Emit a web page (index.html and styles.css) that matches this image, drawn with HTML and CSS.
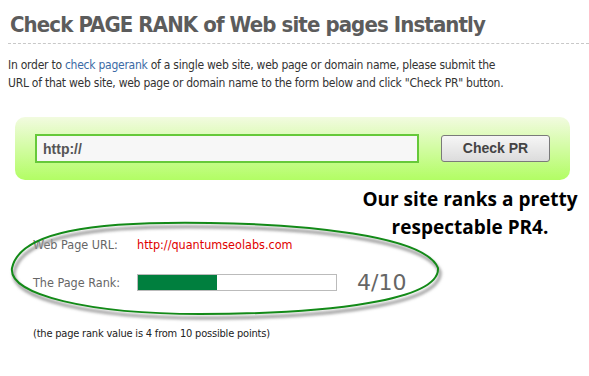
FILE: index.html
```html
<!DOCTYPE html>
<html lang="en">
<head>
    <meta charset="UTF-8">
    <meta name="viewport" content="width=device-width, initial-scale=1.0">
    <title>Check PAGE RANK</title>
    <link rel="stylesheet" href="styles.css">
</head>
<body>
    <div class="page">
        <h1 class="title">Check PAGE RANK of Web site pages Instantly</h1>
        <p class="intro">
            In order to <a href="#">check pagerank</a> of a single web site, web page or domain name, please submit the<br>
            URL of that web site, web page or domain name to the form below and click "Check PR" button.
        </p>

        <div class="check-box">
            <input type="text" class="url-input" value="http://">
            <button class="check-button">Check PR</button>
        </div>

        <p class="note">Our site ranks a pretty<br>respectable PR4.</p>

        <div class="result">
            <div class="result-row">
                <span class="result-label">Web Page URL:</span>
                <span class="result-url">http://quantumseolabs.com</span>
            </div>
            <div class="result-row">
                <span class="result-label">The Page Rank:</span>
                <div class="rank-bar"><div class="rank-fill" style="width: 40%"></div></div>
                <span class="rank-value">4/10</span>
            </div>
        </div>

        <p class="footnote">(the page rank value is 4 from 10 possible points)</p>

        <!-- hand drawn loop round the result -->
        <svg class="highlight" width="460" height="130" viewBox="0 0 460 130">
            <defs>
                <filter id="blur"><feGaussianBlur stdDeviation="1.8"></feGaussianBlur></filter>
            </defs>
            <path d="M12,68 C20,32 90,21 210,23 C300,24 425,35 438,68 C440,100 330,114 200,114 C90,114 8,95 12,68 Z"
                  fill="none" stroke="#9a9a9a" stroke-width="3" filter="url(#blur)" transform="translate(2 4)"></path>
            <path d="M12,68 C20,32 90,21 210,23 C300,24 425,35 438,68 C440,100 330,114 200,114 C90,114 8,95 12,68 Z"
                  fill="none" stroke="#138a18" stroke-width="2"></path>
        </svg>
    </div>
</body>
</html>
```

FILE: styles.css
```css
* {
    margin: 0;
    padding: 0;
    box-sizing: border-box;
}

body {
    font-family: 'DejaVu Sans Condensed', 'DejaVu Sans', sans-serif;
    font-stretch: condensed;
    background: #ffffff;
    color: #333333;
    width: 589px;
    height: 376px;
    overflow: hidden;
}

.page {
    position: relative;
    padding: 9px 0 0 8px;
}

.title {
    font-size: 22px;
    line-height: 32px;
    font-weight: bold;
    letter-spacing: -0.9px;
    color: #5c5c5c;
    padding: 0 0 2px 2px;
    border-bottom: 1px dashed #c8c8c8;
}

.intro {
    margin-top: 12px;
    font-size: 12px;
    line-height: 18px;
    letter-spacing: -0.25px;
    color: #333333;
    white-space: nowrap;
}

.intro a {
    color: #3b6aa5;
    text-decoration: none;
}

.check-box {
    margin: 25px 0 0 7px;
    width: 555px;
    height: 63px;
    display: flex;
    align-items: center;
    gap: 22px;
    padding: 0 20px;
    border-radius: 10px;
    background: linear-gradient(#f2fbe0, #b2fd64);
}

.url-input {
    width: 384px;
    height: 29px;
    border: 2px solid #66c93a;
    background: #f7f7f7;
    padding: 0 6px;
    font-family: 'Liberation Sans', Arial, sans-serif;
    font-size: 14px;
    font-weight: bold;
    color: #555555;
    outline: none;
}

.check-button {
    width: 109px;
    height: 27px;
    margin-top: -1px;
    border: 1px solid #7a7a7a;
    border-radius: 3px;
    background: linear-gradient(#f6f6f6, #dcdcdc);
    font-family: 'Liberation Sans', Arial, sans-serif;
    font-size: 14px;
    font-weight: bold;
    color: #444444;
}

.note {
    margin: 5px 0 -6px 346px;
    width: 232px;
    text-align: center;
    font-family: 'Open Sans', sans-serif;
    font-stretch: normal;
    font-size: 19px;
    font-weight: bold;
    line-height: 28px;
    color: #000000;
}

.result {
    margin-left: 25px;
    display: flex;
    flex-direction: column;
    gap: 19px;
}

.result-row {
    display: flex;
    align-items: center;
    height: 19px;
    font-size: 12.5px;
}

.result-label {
    width: 104px;
    color: #666666;
}

.result-url {
    color: #e00000;
}

.rank-bar {
    width: 200px;
    height: 17px;
    border: 1px solid #bbbbbb;
    background: #ffffff;
}

.rank-fill {
    height: 100%;
    background: #007f3e;
}

.rank-value {
    margin-left: 20px;
    font-family: 'DejaVu Sans', sans-serif;
    font-stretch: normal;
    font-size: 22px;
    color: #666666;
}

.footnote {
    margin: 34px 0 0 25px;
    font-size: 11px;
    line-height: 16px;
    letter-spacing: -0.2px;
    color: #222222;
}

.highlight {
    position: absolute;
    left: 0;
    top: 200px;
}
```
